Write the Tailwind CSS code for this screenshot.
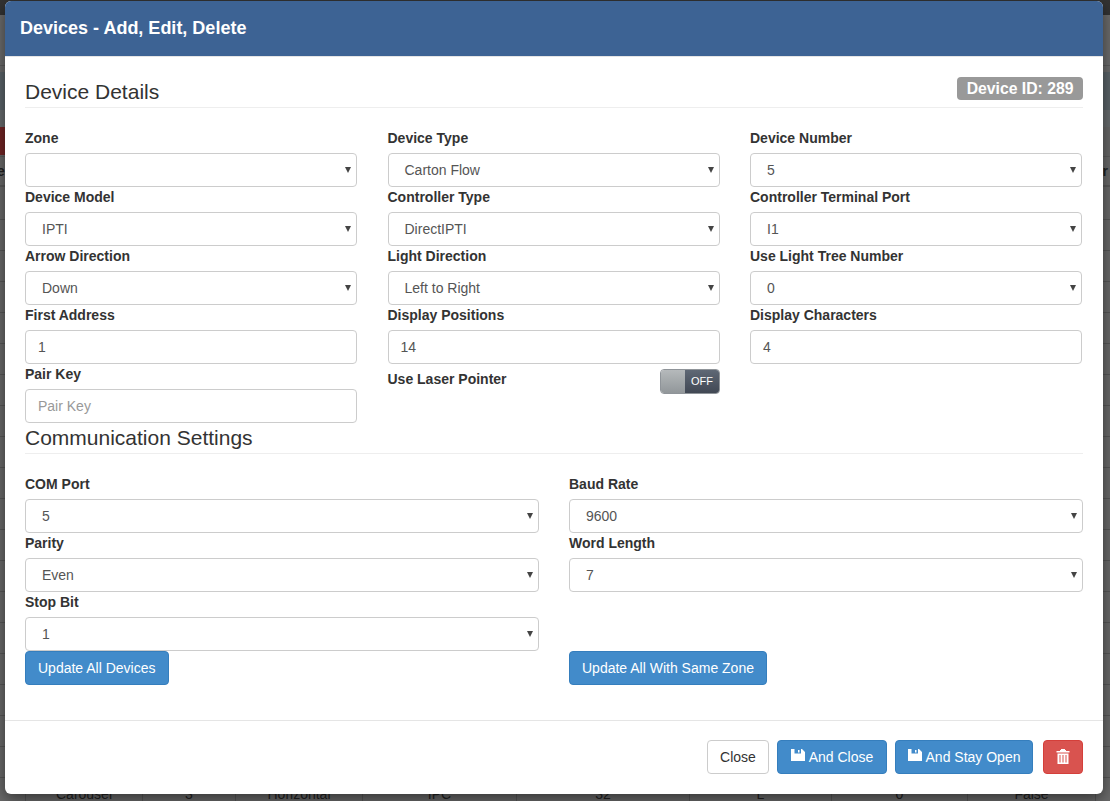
<!DOCTYPE html>
<html>
<head>
    <title>Devices</title>
    <meta name="viewport" content="width=device-width, initial-scale=1.0">
    <script src="https://cdn.jsdelivr.net/npm/@tailwindcss/browser@4"></script>
</head>
<body class="relative bg-[#6a6a6a] font-['Liberation_Sans',Arial,sans-serif] text-[14px] text-[#333] overflow-hidden h-[801px]">
    <!-- Dimmed page behind the modal -->
    <div class="absolute inset-0 overflow-hidden flex flex-col">
        <div class="h-[15px] shrink-0 bg-[#333]"></div>
        <div class="h-[51px] shrink-0 bg-[#6c6c6c] border-b border-[#5c5c5c]"></div>
        <div class="h-[6px] shrink-0 bg-[#6c6c6c]"></div>
        <div class="h-[38px] shrink-0 bg-[#5b6469]"></div>
        <div class="h-[17px] shrink-0 bg-[#686c6e]"></div>
        <div class="h-[30px] shrink-0 bg-[#686868] border-b border-[#5c5c5c]">
            <div class="w-[5px] h-[28px] bg-[#732525]"></div>
        </div>
        <div class="h-[30px] shrink-0 bg-[#6a6a6a] border-b-2 border-[#5a5a5a] flex justify-between items-center font-bold text-[#222]">
            <span class="-ml-[3px]">e</span>
            <span class="mr-[2px]">r</span>
        </div>
        <div class="h-[33px] shrink-0 border-b border-[#575757]"></div>
        <div class="h-[31px] shrink-0 border-b border-[#575757]"></div>
        <div class="h-[31px] shrink-0 border-b border-[#575757]"></div>
        <div class="h-[31px] shrink-0 border-b border-[#575757]"></div>
        <div class="h-[31px] shrink-0 border-b border-[#575757]"></div>
        <div class="h-[31px] shrink-0 border-b border-[#575757]"></div>
        <div class="h-[31px] shrink-0 border-b border-[#575757]"></div>
        <div class="h-[31px] shrink-0 border-b border-[#575757]"></div>
        <div class="h-[31px] shrink-0 border-b border-[#575757]"></div>
        <div class="h-[31px] shrink-0 border-b border-[#575757]"></div>
        <div class="h-[31px] shrink-0 border-b border-[#575757]"></div>
        <div class="h-[31px] shrink-0 border-b border-[#575757]"></div>
        <div class="h-[31px] shrink-0 border-b border-[#575757]"></div>
        <div class="h-[31px] shrink-0 border-b border-[#575757]"></div>
        <div class="h-[31px] shrink-0 border-b border-[#575757]"></div>
        <div class="h-[31px] shrink-0 border-b border-[#575757]"></div>
        <div class="h-[31px] shrink-0 border-b border-[#575757]"></div>
        <div class="h-[31px] shrink-0 border-b border-[#575757]"></div>
        <div class="h-[31px] shrink-0 border-b border-[#575757]"></div>
        <!-- Last table row, only its lower edge shows under the modal -->
        <div class="h-[31px] shrink-0 ml-[25px] w-[1071px] grid grid-cols-[118px_93px_127px_154px_173px_142px_136px_128px] text-center text-[#222] leading-[33px]">
            <span class="border-x border-[#575757]">Carousel</span>
            <span class="border-r border-[#575757]">3</span>
            <span class="border-r border-[#575757]">Horizontal</span>
            <span class="border-r border-[#575757]">IPC</span>
            <span class="border-r border-[#575757]">32</span>
            <span class="border-r border-[#575757]">L</span>
            <span class="border-r border-[#575757]">0</span>
            <span class="border-r border-[#575757]">False</span>
        </div>
    </div>

    <!-- Modal -->
    <div class="relative ml-[5px] mt-px w-[1098px] h-[793px] bg-white rounded-md shadow-[0_5px_15px_rgba(0,0,0,0.5)] overflow-hidden flex flex-col">
        <!-- Header -->
        <div class="h-[56px] shrink-0 bg-[#3d6394] border-b border-[#e5e5e5] px-[15px] pb-px flex items-center">
            <h4 class="text-[18px] font-bold text-white">Devices - Add, Edit, Delete</h4>
        </div>

        <!-- Body -->
        <div class="flex-1 px-[20px]">
            <!-- Device Details -->
            <div class="h-[51px] border-b border-[#eee] flex justify-between items-end">
                <h3 class="text-[21px] leading-[23px] mb-[4px]">Device Details</h3>
                <span class="mb-[7px] h-[23px] px-[9.5px] rounded-[4px] bg-[#999] text-white font-bold text-[15.75px] leading-[23px]">Device ID: 289</span>
            </div>

            <div class="grid grid-cols-[332px_332.5px_332px] gap-x-[30.5px] mt-[22px]">
                <div class="h-[59px]">
                    <label class="block font-bold leading-[17px] mb-[6px]">Zone</label>
                    <div class="relative h-[34px] border border-[#ccc] rounded-[4px] px-[16px] leading-[32px] text-[#555]"><span class="absolute right-[5px] top-[13px] w-0 h-0 border-x-[3.5px] border-x-transparent border-t-[6px] border-t-[#444]"></span></div>
                </div>
                <div class="h-[59px]">
                    <label class="block font-bold leading-[17px] mb-[6px]">Device Type</label>
                    <div class="relative h-[34px] border border-[#ccc] rounded-[4px] px-[16px] leading-[32px] text-[#555]">Carton Flow<span class="absolute right-[5px] top-[13px] w-0 h-0 border-x-[3.5px] border-x-transparent border-t-[6px] border-t-[#444]"></span></div>
                </div>
                <div class="h-[59px] -ml-[0.5px] mr-[0.5px]">
                    <label class="block font-bold leading-[17px] mb-[6px]">Device Number</label>
                    <div class="relative h-[34px] border border-[#ccc] rounded-[4px] px-[16px] leading-[32px] text-[#555]">5<span class="absolute right-[5px] top-[13px] w-0 h-0 border-x-[3.5px] border-x-transparent border-t-[6px] border-t-[#444]"></span></div>
                </div>

                <div class="h-[59px]">
                    <label class="block font-bold leading-[17px] mb-[6px]">Device Model</label>
                    <div class="relative h-[34px] border border-[#ccc] rounded-[4px] px-[16px] leading-[32px] text-[#555]">IPTI<span class="absolute right-[5px] top-[13px] w-0 h-0 border-x-[3.5px] border-x-transparent border-t-[6px] border-t-[#444]"></span></div>
                </div>
                <div class="h-[59px]">
                    <label class="block font-bold leading-[17px] mb-[6px]">Controller Type</label>
                    <div class="relative h-[34px] border border-[#ccc] rounded-[4px] px-[16px] leading-[32px] text-[#555]">DirectIPTI<span class="absolute right-[5px] top-[13px] w-0 h-0 border-x-[3.5px] border-x-transparent border-t-[6px] border-t-[#444]"></span></div>
                </div>
                <div class="h-[59px] -ml-[0.5px] mr-[0.5px]">
                    <label class="block font-bold leading-[17px] mb-[6px]">Controller Terminal Port</label>
                    <div class="relative h-[34px] border border-[#ccc] rounded-[4px] px-[16px] leading-[32px] text-[#555]">I1<span class="absolute right-[5px] top-[13px] w-0 h-0 border-x-[3.5px] border-x-transparent border-t-[6px] border-t-[#444]"></span></div>
                </div>

                <div class="h-[59px]">
                    <label class="block font-bold leading-[17px] mb-[6px]">Arrow Direction</label>
                    <div class="relative h-[34px] border border-[#ccc] rounded-[4px] px-[16px] leading-[32px] text-[#555]">Down<span class="absolute right-[5px] top-[13px] w-0 h-0 border-x-[3.5px] border-x-transparent border-t-[6px] border-t-[#444]"></span></div>
                </div>
                <div class="h-[59px]">
                    <label class="block font-bold leading-[17px] mb-[6px]">Light Direction</label>
                    <div class="relative h-[34px] border border-[#ccc] rounded-[4px] px-[16px] leading-[32px] text-[#555]">Left to Right<span class="absolute right-[5px] top-[13px] w-0 h-0 border-x-[3.5px] border-x-transparent border-t-[6px] border-t-[#444]"></span></div>
                </div>
                <div class="h-[59px] -ml-[0.5px] mr-[0.5px]">
                    <label class="block font-bold leading-[17px] mb-[6px]">Use Light Tree Number</label>
                    <div class="relative h-[34px] border border-[#ccc] rounded-[4px] px-[16px] leading-[32px] text-[#555]">0<span class="absolute right-[5px] top-[13px] w-0 h-0 border-x-[3.5px] border-x-transparent border-t-[6px] border-t-[#444]"></span></div>
                </div>

                <div class="h-[59px]">
                    <label class="block font-bold leading-[17px] mb-[6px]">First Address</label>
                    <div class="h-[34px] border border-[#ccc] rounded-[4px] px-[12px] leading-[32px] text-[#555]">1</div>
                </div>
                <div class="h-[59px]">
                    <label class="block font-bold leading-[17px] mb-[6px]">Display Positions</label>
                    <div class="h-[34px] border border-[#ccc] rounded-[4px] px-[12px] leading-[32px] text-[#555]">14</div>
                </div>
                <div class="h-[59px] -ml-[0.5px] mr-[0.5px]">
                    <label class="block font-bold leading-[17px] mb-[6px]">Display Characters</label>
                    <div class="h-[34px] border border-[#ccc] rounded-[4px] px-[12px] leading-[32px] text-[#555]">4</div>
                </div>

                <div class="h-[59px]">
                    <label class="block font-bold leading-[17px] mb-[6px]">Pair Key</label>
                    <div class="h-[34px] border border-[#ccc] rounded-[4px] px-[12px] leading-[32px] text-[#999]">Pair Key</div>
                </div>
                <div class="h-[59px] flex justify-between items-start">
                    <label class="font-bold leading-[17px] mt-[5px]">Use Laser Pointer</label>
                    <!-- Toggle -->
                    <div class="flex w-[60px] h-[25px] mt-[3px] rounded-[4px] overflow-hidden border border-[#8f9499]">
                        <span class="w-[24px] bg-gradient-to-b from-[#b5b9bb] to-[#92979a]"></span>
                        <span class="flex-1 bg-gradient-to-b from-[#5f6875] to-[#414854] text-white text-[11px] text-center leading-[23px]">OFF</span>
                    </div>
                </div>
            </div>

            <!-- Communication Settings -->
            <div class="h-[31px] border-b border-[#eee] -mt-[2px]">
                <h3 class="text-[21px] leading-[23px] pt-[3px]">Communication Settings</h3>
            </div>

            <div class="grid grid-cols-[514px_514px] gap-x-[30px] mt-[22px]">
                <div class="h-[59px]">
                    <label class="block font-bold leading-[17px] mb-[6px]">COM Port</label>
                    <div class="relative h-[34px] border border-[#ccc] rounded-[4px] px-[16px] leading-[32px] text-[#555]">5<span class="absolute right-[5px] top-[13px] w-0 h-0 border-x-[3.5px] border-x-transparent border-t-[6px] border-t-[#444]"></span></div>
                </div>
                <div class="h-[59px]">
                    <label class="block font-bold leading-[17px] mb-[6px]">Baud Rate</label>
                    <div class="relative h-[34px] border border-[#ccc] rounded-[4px] px-[16px] leading-[32px] text-[#555]">9600<span class="absolute right-[5px] top-[13px] w-0 h-0 border-x-[3.5px] border-x-transparent border-t-[6px] border-t-[#444]"></span></div>
                </div>
                <div class="h-[59px]">
                    <label class="block font-bold leading-[17px] mb-[6px]">Parity</label>
                    <div class="relative h-[34px] border border-[#ccc] rounded-[4px] px-[16px] leading-[32px] text-[#555]">Even<span class="absolute right-[5px] top-[13px] w-0 h-0 border-x-[3.5px] border-x-transparent border-t-[6px] border-t-[#444]"></span></div>
                </div>
                <div class="h-[59px]">
                    <label class="block font-bold leading-[17px] mb-[6px]">Word Length</label>
                    <div class="relative h-[34px] border border-[#ccc] rounded-[4px] px-[16px] leading-[32px] text-[#555]">7<span class="absolute right-[5px] top-[13px] w-0 h-0 border-x-[3.5px] border-x-transparent border-t-[6px] border-t-[#444]"></span></div>
                </div>
                <div class="h-[57px]">
                    <label class="block font-bold leading-[17px] mb-[6px]">Stop Bit</label>
                    <div class="relative h-[34px] border border-[#ccc] rounded-[4px] px-[16px] leading-[32px] text-[#555]">1<span class="absolute right-[5px] top-[13px] w-0 h-0 border-x-[3.5px] border-x-transparent border-t-[6px] border-t-[#444]"></span></div>
                </div>
                <div></div>
                <div><button class="h-[34px] px-[12px] bg-[#428bca] border border-[#357ebd] rounded-[4px] text-white">Update All Devices</button></div>
                <div><button class="h-[34px] px-[12px] bg-[#428bca] border border-[#357ebd] rounded-[4px] text-white">Update All With Same Zone</button></div>
            </div>
        </div>

        <!-- Footer -->
        <div class="h-[74px] shrink-0 border-t border-[#e5e5e5] px-[20px] flex justify-end items-start pt-[19px] gap-[8px]">
            <button class="h-[34px] w-[62px] bg-white border border-[#ccc] rounded-[4px]">Close</button>
            <button class="h-[34px] w-[110px] bg-[#428bca] border border-[#357ebd] rounded-[4px] text-white flex items-center justify-center gap-[4px]">
                <svg class="w-[14px] h-[12px] -mt-[5px]" viewBox="0 0 14 12" fill="#fff"><path fill-rule="evenodd" d="M0 0h11l3 3v9H0zM3.500 0v4.500h6.500V0zM7 1h1.500v2.500H7z"/></svg>
                And Close</button>
            <button class="h-[34px] w-[138px] bg-[#428bca] border border-[#357ebd] rounded-[4px] text-white flex items-center justify-center gap-[4px]">
                <svg class="w-[14px] h-[12px] -mt-[5px]" viewBox="0 0 14 12" fill="#fff"><path fill-rule="evenodd" d="M0 0h11l3 3v9H0zM3.500 0v4.500h6.500V0zM7 1h1.500v2.500H7z"/></svg>
                And Stay Open</button>
            <button class="ml-[2px] h-[34px] w-[40px] bg-[#d9534f] border border-[#d43f3a] rounded-[4px] flex items-center justify-center">
                <svg class="w-[14px] h-[15px] -mt-[2px]" viewBox="0 0 14 15" fill="#fff"><path fill-rule="evenodd" d="M5 0h4v1h1v1h3.500v1.500H.5V2H4V1h1zM1.500 4.500h11V15h-11zM3.500 6v7.500h1V6zM6.500 6v7.500h1V6zM9.500 6v7.500h1V6z"/></svg>
            </button>
        </div>
    </div>
</body>
</html>
